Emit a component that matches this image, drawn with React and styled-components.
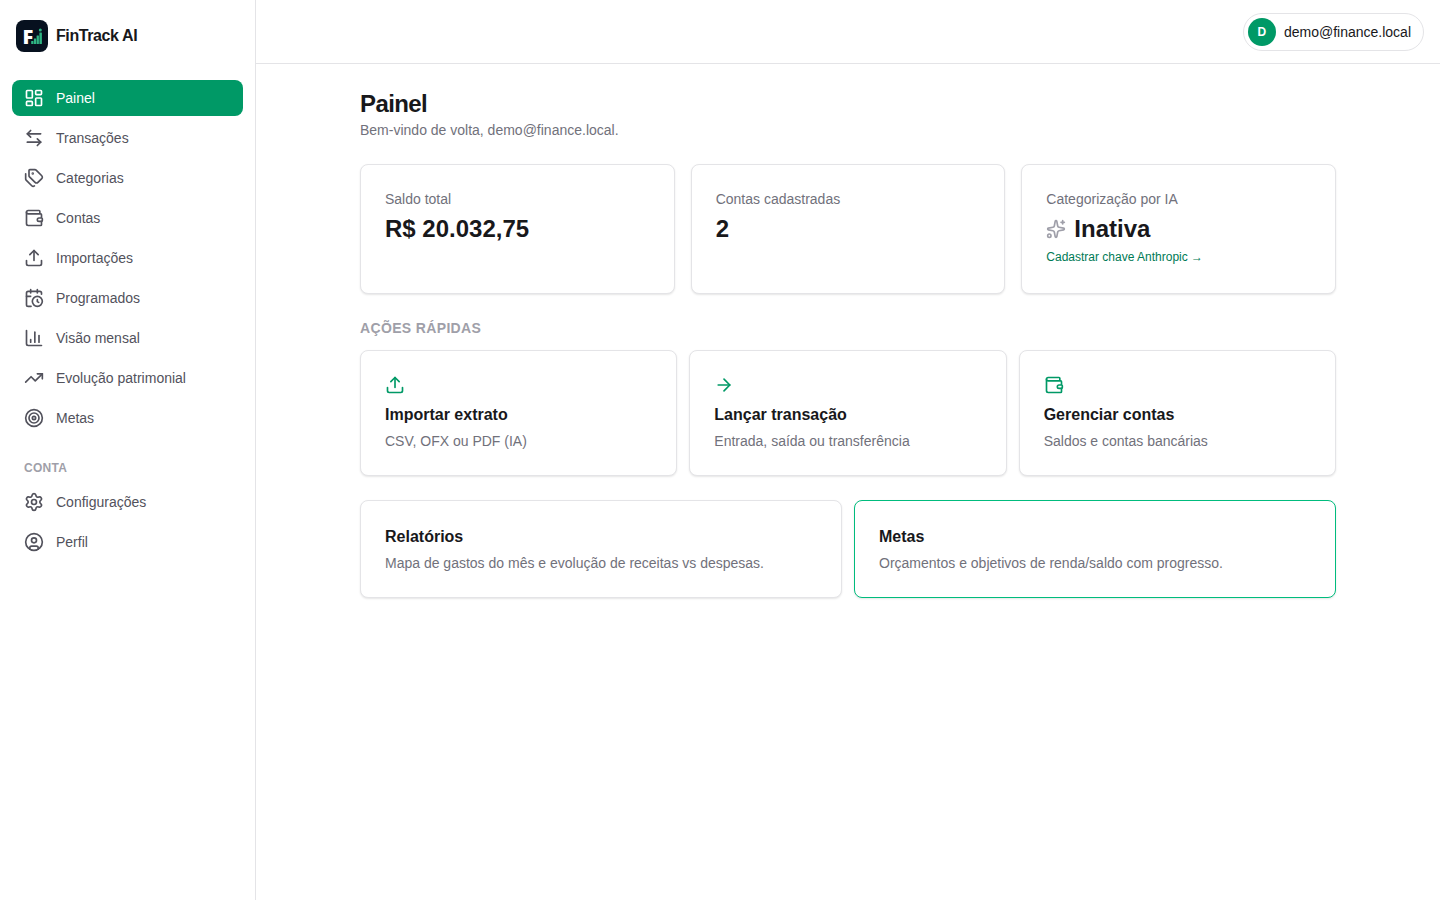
import styled, { createGlobalStyle } from "styled-components"
import {
    ArrowLeftRight,
    ArrowRight,
    CalendarClock,
    ChartColumn,
    CircleUser,
    LayoutDashboard,
    Settings,
    Sparkles,
    Tags,
    Target,
    TrendingUp,
    Upload,
    Wallet,
} from "lucide-react"


const mainLinks = [
    { label: "Painel", icon: LayoutDashboard, active: true },
    { label: "Transações", icon: ArrowLeftRight },
    { label: "Categorias", icon: Tags },
    { label: "Contas", icon: Wallet },
    { label: "Importações", icon: Upload },
    { label: "Programados", icon: CalendarClock },
    { label: "Visão mensal", icon: ChartColumn },
    { label: "Evolução patrimonial", icon: TrendingUp },
    { label: "Metas", icon: Target },
]

const accountLinks = [
    { label: "Configurações", icon: Settings },
    { label: "Perfil", icon: CircleUser },
]

const actions = [
    { title: "Importar extrato", text: "CSV, OFX ou PDF (IA)", icon: Upload },
    { title: "Lançar transação", text: "Entrada, saída ou transferência", icon: ArrowRight },
    { title: "Gerenciar contas", text: "Saldos e contas bancárias", icon: Wallet },
]

const Logo = () => (
    <svg width="32" height="32" viewBox="0 0 32 32" aria-hidden="true">
        <rect width="32" height="32" rx="8" fill="#07111f" />
        <LogoLetter x="6.6" y="24">F</LogoLetter>
        <g fill="#2fb583">
            <rect x="15.2" y="21" width="2.3" height="3" rx="0.3" />
            <rect x="17.9" y="18.4" width="2.3" height="5.6" rx="0.3" />
            <rect x="20.6" y="15.6" width="2.3" height="8.4" rx="0.3" />
            <rect x="23.4" y="12.6" width="2.5" height="11.4" rx="0.3" />
            <circle cx="24.3" cy="9.9" r="1.5" />
        </g>
    </svg>
)

const NavList = ({ links }) => (
    <List>
        {links.map(({ label, icon: Icon, active }) => (
            <li key={label}>
                <NavLink href="#" $active={active} aria-current={active ? "page" : undefined}>
                    <Icon size={20} />
                    {label}
                </NavLink>
            </li>
        ))}
    </List>
)

const App = () => {

    return (
        <>
            <GlobalStyle />
            <Layout>
                <Sidebar>
                    <Brand href="#">
                        <Logo />
                        FinTrack AI
                    </Brand>
                    <Nav>
                        <NavList links={mainLinks} />
                        <NavHeading>Conta</NavHeading>
                        <NavList links={accountLinks} />
                    </Nav>
                </Sidebar>
                <Page>
                    <Header>
                        <UserButton type="button">
                            <Avatar>D</Avatar>
                            demo@finance.local
                        </UserButton>
                    </Header>
                    <Content>
                        <div>
                            <Title>Painel</Title>
                            <Muted>Bem-vindo de volta, demo@finance.local.</Muted>
                        </div>
                        <Stats>
                            <Card>
                                <Muted>Saldo total</Muted>
                                <Value>R$ 20.032,75</Value>
                            </Card>
                            <Card>
                                <Muted>Contas cadastradas</Muted>
                                <Value>2</Value>
                            </Card>
                            <Card>
                                <Muted>Categorização por IA</Muted>
                                <Value>
                                    <Sparkles size={20} color="#9f9fa9" />
                                    Inativa
                                </Value>
                                <KeyLink href="#">Cadastrar chave Anthropic →</KeyLink>
                            </Card>
                        </Stats>
                        <section>
                            <SectionTitle>Ações rápidas</SectionTitle>
                            <CardGrid $columns={3}>
                                {actions.map(({ title, text, icon: Icon }) => (
                                    <CardLink href="#" key={title}>
                                        <Icon size={20} color="#009966" />
                                        <CardTitle>{title}</CardTitle>
                                        <Muted>{text}</Muted>
                                    </CardLink>
                                ))}
                            </CardGrid>
                        </section>
                        <CardGrid $columns={2}>
                            <CardLink href="#">
                                <CardTitle>Relatórios</CardTitle>
                                <Muted>Mapa de gastos do mês e evolução de receitas vs despesas.</Muted>
                            </CardLink>
                            <CardLink href="#" $highlight>
                                <CardTitle>Metas</CardTitle>
                                <Muted>Orçamentos e objetivos de renda/saldo com progresso.</Muted>
                            </CardLink>
                        </CardGrid>
                    </Content>
                </Page>
            </Layout>
        </>
    )
}


const GlobalStyle = createGlobalStyle`
* {
    box-sizing: border-box;
    margin: 0;
    padding: 0;
}
body {
    background: #fff;
    color: #18181b;
    font-family: "Liberation Sans", Arial, sans-serif;
    font-size: 16px;
    line-height: 24px;
    -webkit-font-smoothing: antialiased;
}
a {
    color: inherit;
    text-decoration: none;
}
svg {
    display: block;
    flex-shrink: 0;
}
`;

const LogoLetter = styled.text`
font-family: "Open Sans", sans-serif;
font-size: 20px;
font-weight: 800;
fill: #fff;
`;

const Layout = styled.div`
display: flex;
min-height: 100vh;
`;

const Sidebar = styled.aside`
width: 256px;
flex-shrink: 0;
border-right: 1px solid #e4e4e7;
`;

const Brand = styled.a`
display: flex;
align-items: center;
gap: 8px;
padding: 20px 16px;
font-weight: 600;
letter-spacing: -0.025em;
`;

const Nav = styled.nav`
padding: 8px 12px;
`;

const List = styled.ul`
display: flex;
flex-direction: column;
gap: 4px;
list-style: none;
`;

const NavLink = styled.a`
display: flex;
align-items: center;
gap: 12px;
padding: 8px 12px;
border-radius: 8px;
font-size: 14px;
line-height: 20px;
color: ${props => props.$active ? "#fff" : "#52525c"};
background: ${props => props.$active ? "#009966" : "transparent"};
&:hover {
    background: ${props => props.$active ? "#009966" : "#f4f4f5"};
}
`;

const NavHeading = styled.h2`
padding: 24px 12px 8px;
font-size: 12px;
line-height: 16px;
font-weight: 600;
letter-spacing: 0.025em;
text-transform: uppercase;
color: #9f9fa9;
`;

const Page = styled.div`
flex: 1;
min-width: 0;
`;

const Header = styled.header`
display: flex;
align-items: center;
justify-content: flex-end;
height: 64px;
padding: 0 16px;
border-bottom: 1px solid #e4e4e7;
`;

const UserButton = styled.button`
display: flex;
align-items: center;
gap: 8px;
padding: 4px 12px 4px 4px;
border: 1px solid #e4e4e7;
border-radius: 999px;
background: #fff;
color: #18181b;
font-family: inherit;
font-size: 14px;
line-height: 20px;
cursor: pointer;
`;

const Avatar = styled.span`
display: flex;
align-items: center;
justify-content: center;
width: 28px;
height: 28px;
border-radius: 50%;
background: #009966;
color: #fff;
font-size: 12px;
font-weight: 600;
`;

const Content = styled.main`
display: flex;
flex-direction: column;
gap: 24px;
max-width: 1024px;
margin: 0 auto;
padding: 24px;
`;

const Title = styled.h1`
font-size: 24px;
line-height: 32px;
font-weight: 600;
letter-spacing: -0.025em;
`;

const Muted = styled.p`
font-size: 14px;
line-height: 20px;
color: #71717b;
`;

const Stats = styled.section`
display: grid;
grid-template-columns: repeat(3, 1fr);
gap: 16px;
`;

const CardGrid = styled.div`
display: grid;
grid-template-columns: repeat(${props => props.$columns}, 1fr);
gap: 12px;
`;

const Card = styled.div`
padding: 24px;
border: 1px solid ${props => props.$highlight ? "#00bc7d" : "#e4e4e7"};
border-radius: 8px;
background: #fff;
box-shadow: 0 1px 2px rgba(0, 0, 0, 0.1);
`;

const CardLink = styled(Card).attrs({ as: "a" })`
display: block;
&:hover {
    border-color: #00bc7d;
}
`;

const Value = styled.p`
display: flex;
align-items: center;
gap: 8px;
margin-top: 4px;
font-size: 24px;
line-height: 32px;
font-weight: 600;
`;

const KeyLink = styled.a`
display: block;
font-size: 12px;
line-height: 16px;
padding: 4px 0;
color: #007a55;
&:hover {
    text-decoration: underline;
}
`;

const SectionTitle = styled.h2`
margin-bottom: 12px;
font-size: 14px;
line-height: 20px;
font-weight: 600;
letter-spacing: 0.025em;
text-transform: uppercase;
color: #9f9fa9;
`;

const CardTitle = styled.h3`
margin-bottom: 4px;
font-size: 16px;
line-height: 24px;
font-weight: 600;
svg + & {
    margin-top: 8px;
}
`;

export default App;
